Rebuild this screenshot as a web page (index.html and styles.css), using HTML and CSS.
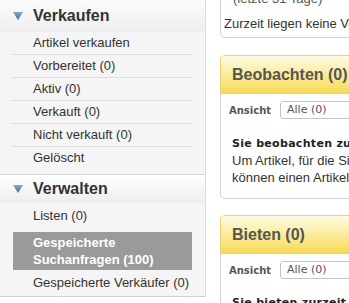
FILE: index.html
```html
<!DOCTYPE html>
<html lang="de">
<head>
<meta charset="utf-8">
<title>Mein eBay</title>
<link rel="stylesheet" href="styles.css">
</head>
<body>
<div class="page">
  <nav class="sidebar">
    <section class="group group-sell">
      <h2 class="group-head">
        <svg class="tri" width="10" height="8" viewBox="0 0 10 8"><defs><linearGradient id="tg" x1="0" y1="0" x2="0" y2="1"><stop offset="0" stop-color="#8aa8c8"/><stop offset="1" stop-color="#3f6b97"/></linearGradient></defs><polygon points="0,0 10,0 5,8" fill="url(#tg)"/></svg>
        Verkaufen
      </h2>
      <ul class="lined">
        <li>Artikel verkaufen</li>
        <li>Vorbereitet (0)</li>
        <li>Aktiv (0)</li>
        <li>Verkauft (0)</li>
        <li>Nicht verkauft (0)</li>
        <li>Gelöscht</li>
      </ul>
    </section>
    <section class="group group-manage">
      <h2 class="group-head head-manage">
        <svg class="tri" width="10" height="8" viewBox="0 0 10 8"><polygon points="0,0 10,0 5,8" fill="url(#tg)"/></svg>
        Verwalten
      </h2>
      <ul class="plain">
        <li>Listen (0)</li>
        <li class="active">Gespeicherte<br>Suchanfragen (100)</li>
        <li>Gespeicherte Verkäufer (0)</li>
      </ul>
    </section>
  </nav>

  <main class="main">
    <div class="note-box">
      <div class="note-sub">(letzte 31 Tage)</div>
      <div class="note-text">Zurzeit liegen keine Verkäufe vor.</div>
    </div>

    <div class="panel">
      <div class="panel-head">Beobachten (0)</div>
      <div class="panel-body">
        <div class="filter">
          <span class="filter-label">Ansicht</span>
          <span class="select">Alle (0)</span>
        </div>
        <p class="msg"><b>Sie beobachten zurzeit keine Artikel.</b><br>Um Artikel, für die Sie sich interessieren, zu beobachten, klicken Sie<br>können einen Artikel auch direkt von der Artikelseite aus beobachten.</p>
      </div>
    </div>

    <div class="panel">
      <div class="panel-head">Bieten (0)</div>
      <div class="panel-body">
        <div class="filter">
          <span class="filter-label">Ansicht</span>
          <span class="select">Alle (0)</span>
        </div>
        <p class="msg"><b>Sie bieten zurzeit auf keine Artikel.</b></p>
      </div>
    </div>
  </main>
</div>
</body>
</html>
```

FILE: styles.css
```css
html, body {
  margin: 0;
  padding: 0;
  background: #fff;
  overflow: hidden;
}
body {
  font-family: "Liberation Sans", Arial, sans-serif;
  color: #333;
}
.page {
  display: flex;
  align-items: flex-start;
  width: 600px;
}

/* Sidebar */
.sidebar {
  width: 205px;
  flex: none;
  border-right: 1px solid #dcdcdc;
  border-bottom: 1px solid #cfcfcf;
  background: #f5f5f5;
}
.group {
  margin: 0;
}
.group-sell {
  border-bottom: 1px solid #d6d6d6;
  padding-bottom: 5px;
}
.group-manage {
  padding-bottom: 1px;
}
.group-head {
  margin: 0;
  height: 32px;
  display: flex;
  align-items: center;
  padding-left: 13px;
  font-size: 16px;
  font-weight: bold;
  color: #333;
  background: linear-gradient(#fbfbfb, #eeeeee);
}
.head-manage {
  height: 28px;
  background: linear-gradient(#ffffff, #ededed);
}
.tri {
  display: block;
  margin-right: 10px;
  flex: none;
}
ul {
  list-style: none;
  margin: 0;
  padding: 0;
}
.lined li {
  margin: 0 13px 0 12px;
  padding-left: 21px;
  line-height: 22px;
  font-size: 13px;
  color: #333;
  border-bottom: 1px solid #dedede;
}
.lined li:last-child {
  border-bottom: none;
}
.plain li {
  margin: 0 13px 0 13px;
  padding: 4px 0 4px 20px;
  line-height: 17px;
  font-size: 13px;
  color: #333;
}
.plain li.active {
  margin-top: 4px;
  padding: 2px 0 2px 20px;
  background: #9a9a9a;
  color: #fff;
  font-weight: bold;
}

/* Main */
.main {
  margin-left: 14px;
  width: 380px;
  flex: none;
}
.note-box {
  margin-top: -30px;
  border: 1px solid #cfcfcf;
  border-radius: 5px;
  padding: 19px 0 5px 3px;
  font-size: 13px;
  line-height: 17px;
  color: #333;
}
.note-sub {
  padding-left: 9px;
  margin-bottom: 8px;
  color: #555;
}
.note-text {
  white-space: nowrap;
}
.panel {
  margin-top: 17px;
}
.panel + .panel {
  margin-top: 16px;
}
.panel-head {
  height: 37px;
  line-height: 37px;
  padding-left: 11px;
  border: 1px solid #e8d272;
  border-radius: 5px 5px 0 0;
  background: linear-gradient(#fffbe4, #f7db55);
  font-size: 16px;
  font-weight: bold;
  color: #555;
}
.panel-body {
  border: 1px solid #d2d2d2;
  border-top: none;
  border-radius: 0 0 5px 5px;
  padding: 7px 0 12px 0;
}
.filter {
  display: flex;
  align-items: center;
  padding-left: 8px;
}
.filter-label {
  font-family: "DejaVu Sans", Verdana, sans-serif;
  font-size: 10px;
  font-weight: bold;
  color: #555;
  width: 51px;
}
.select {
  box-sizing: border-box;
  height: 18px;
  width: 160px;
  border: 1px solid #c4c4c4;
  border-radius: 3px;
  padding-left: 6px;
  font-family: "DejaVu Sans", Verdana, sans-serif;
  font-size: 11px;
  line-height: 16px;
  color: #555;
}
.msg {
  margin: 15px 0 0 0;
  padding-left: 11px;
  font-size: 13px;
  line-height: 17px;
  color: #333;
  white-space: nowrap;
}
.msg b {
  font-family: "DejaVu Sans", Verdana, sans-serif;
  font-size: 11px;
  letter-spacing: 0.3px;
  color: #222;
}
.panel + .panel .msg {
  margin-top: 14px;
}
```
